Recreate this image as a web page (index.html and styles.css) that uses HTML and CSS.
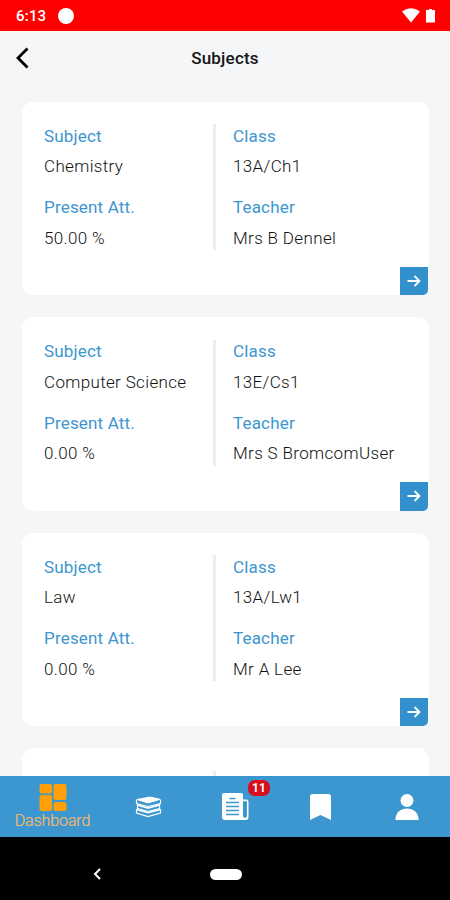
FILE: index.html
```
<!DOCTYPE html>
<html lang="en">
<head>
<meta charset="utf-8">
<title>Subjects</title>
<link rel="stylesheet" href="styles.css">
</head>
<body>
<div class="status">
  <span class="time">6:13</span><span class="dot"></span>
  <svg class="wifi" width="18" height="15" viewBox="0 0 18 15"><path fill="#fff" d="M0 3.500Q9-3 18 3.500L9 14.500Z"/></svg>
  <svg class="battery" width="9" height="15" viewBox="0 0 9 15"><path fill="#fff" d="M0 2h3V1h3v1h3v12.500H0z"/></svg>
</div>
<header class="header">
  <svg class="back" width="16" height="24" viewBox="0 0 16 24"><path d="M13.500 2.500L4 12l9.500 9.500" fill="none" stroke="#000" stroke-width="2.800"/></svg>
  <h1>Subjects</h1>
</header>
<main class="list">
  <section class="card">
    <div class="col left"><div class="label">Subject</div><div class="value">Chemistry</div><div class="label second">Present Att.</div><div class="value">50.00 %</div></div>
    <div class="col right"><div class="label">Class</div><div class="value">13A/Ch1</div><div class="label second">Teacher</div><div class="value">Mrs B Dennel</div></div>
    <div class="go"><svg width="14" height="12" viewBox="0 0 14 12"><path d="M0.500 6h12M7.500 1l5 5-5 5" fill="none" stroke="#fff" stroke-width="1.800"/></svg></div>
  </section>
  <section class="card">
    <div class="col left"><div class="label">Subject</div><div class="value">Computer Science</div><div class="label second">Present Att.</div><div class="value">0.00 %</div></div>
    <div class="col right"><div class="label">Class</div><div class="value">13E/Cs1</div><div class="label second">Teacher</div><div class="value">Mrs S BromcomUser</div></div>
    <div class="go"><svg width="14" height="12" viewBox="0 0 14 12"><path d="M0.500 6h12M7.500 1l5 5-5 5" fill="none" stroke="#fff" stroke-width="1.800"/></svg></div>
  </section>
  <section class="card">
    <div class="col left"><div class="label">Subject</div><div class="value">Law</div><div class="label second">Present Att.</div><div class="value">0.00 %</div></div>
    <div class="col right"><div class="label">Class</div><div class="value">13A/Lw1</div><div class="label second">Teacher</div><div class="value">Mr A Lee</div></div>
    <div class="go"><svg width="14" height="12" viewBox="0 0 14 12"><path d="M0.500 6h12M7.500 1l5 5-5 5" fill="none" stroke="#fff" stroke-width="1.800"/></svg></div>
  </section>
  <section class="card">
    <div class="col left"><div class="label">Subject</div></div>
    <div class="col right"><div class="label">Class</div></div>
  </section>
</main>
<nav class="tabs">
  <div class="tab active">
    <svg width="28" height="27" viewBox="0 0 28 27" fill="#ffa008"><rect x=".5" width="12.500" height="9.500" rx="2"/><rect x=".5" y="11" width="12.500" height="16" rx="2"/><rect x="14.500" width="13" height="16" rx="2"/><rect x="14.500" y="18" width="13" height="9" rx="2"/></svg>
    <span>Dashboard</span>
  </div>
  <div class="tab">
    <svg width="27" height="22" viewBox="0 0 27 22" fill="none" stroke="#fff"><path d="M2 3.500L15 1l10 2.300-12 3.700z" fill="#fff"/><path d="M1.500 3.500v4L13 10.500 25.500 7.500v-4" stroke-width="1.200"/><path d="M2.500 8v4.500L13 15.500l11.500-3V8" stroke-width="1.200"/><path d="M1.500 13.500V17L13 20.500 25.500 17v-3.500" stroke-width="1.200"/><path d="M2.500 9L13 12l11.500-3M1.500 13.500L13 16.700l12.500-3.200" stroke-width="1.700"/></svg>
  </div>
  <div class="tab">
    <svg class="news" width="27" height="27" viewBox="0 0 27 27"><path d="M2 0h17q2 0 2 2v4.500h3.500q2 0 2 2V24q0 3-3 3H3q-3 0-3-3V2Q0 0 2 0z" fill="#fff"/><path d="M21.700 9h2.500v14q-1.200 2.500-2.500 0zM7.500 5.500h6M4 9.500h13M4 13.500h13M4 17.500h13M4 21.500h13" fill="#3c96cf" stroke="#3c96cf" stroke-width="1.500"/></svg>
    <b class="badge">11</b>
  </div>
  <div class="tab">
    <svg width="21" height="26" viewBox="0 0 21 26"><path fill="#fff" d="M0 26V2.500Q0 0 2.500 0h16Q21 0 21 2.500V26l-10.500-5z"/></svg>
  </div>
  <div class="tab">
    <svg width="24" height="26" viewBox="0 0 24 26" fill="#fff"><circle cx="12" cy="6.500" r="6.500"/><path d="M0.500 26v-2C1.500 18 6 14.500 12 14.500S22.500 18 23.500 24v2z"/></svg>
  </div>
</nav>
<footer class="system">
  <svg width="8" height="12" viewBox="0 0 8 12"><path d="M7 1L2 6l5 5" fill="none" stroke="#fff" stroke-width="2"/></svg>
  <span class="pill"></span>
</footer>
</body>
</html>
```
FILE: styles.css
```
* { box-sizing: border-box; }
body { margin: 0; width: 450px; height: 900px; overflow: hidden; display: flex; flex-direction: column; background: #f5f6f8; font-family: Roboto, sans-serif; color: #111; }
svg { display: block; flex: none; }
.status { height: 30.500px; flex: none; background: #f00; display: flex; align-items: center; padding: 1px 15px 0 16px; color: #fff; }
.time { width: 42px; font-size: 15px; font-weight: 500; letter-spacing: .2px; padding-top: 1px; }
.dot { width: 16px; height: 16px; border-radius: 50%; background: #fff; margin-right: auto; }
.battery { margin-left: 6px; }
.header { height: 71px; flex: none; display: grid; grid-template-columns: 22px 1fr 22px; align-items: start; padding: 15px 14px 0; }
h1 { margin: 2px 0 0; text-align: center; font-size: 17px; line-height: 20px; font-weight: 500; letter-spacing: .2px; color: #151515; }
.list { flex: 1; min-height: 0; overflow: hidden; padding: 0 21.500px 0 22px; display: flex; flex-direction: column; gap: 22px; }
.card { position: relative; flex: none; height: 193.500px; border-radius: 11px; background: #fff; display: grid; grid-template-columns: 194px 1fr; align-items: start; padding-top: 22.500px; }
.col { height: 126px; font-size: 17px; line-height: 30.500px; white-space: nowrap; }
.left { padding-left: 22px; border-right: 3px solid #ededee; }
.right { padding-left: 17px; }
.label { color: #3c96cf; letter-spacing: .18px; margin-top: -3.300px; }
.second { margin-top: 10.500px; }
.value { color: #111; font-weight: 300; letter-spacing: .35px; }
.go { position: absolute; right: .5px; bottom: 0; width: 28.500px; height: 28.500px; background: #3291cc; border-bottom-right-radius: 5px; display: grid; place-items: center; }
.tabs { position: relative; height: 61px; flex: none; background: #3c96cf; display: grid; grid-template-columns: 105px 86px 86px 86px 87px; }
.tab { position: relative; display: grid; place-items: center; }
.active { align-content: start; padding-top: 8px; }
.active span { font-size: 16px; line-height: 20px; font-weight: 300; letter-spacing: -.1px; color: #f5ba66; -webkit-text-stroke: .2px #f5ba66; }
.news { margin-left: 2px; }
.badge { position: absolute; left: 57px; top: 4px; width: 22px; height: 16px; border-radius: 7px; background: #d90e1c; color: #fff; font-size: 12px; line-height: 17px; font-weight: 700; text-align: center; }
.system { height: 63px; flex: none; background: #000; display: flex; align-items: center; padding: 11px 0 0 93px; gap: 109px; }
.pill { width: 32px; height: 11px; border-radius: 6px; background: #fff; }
```
